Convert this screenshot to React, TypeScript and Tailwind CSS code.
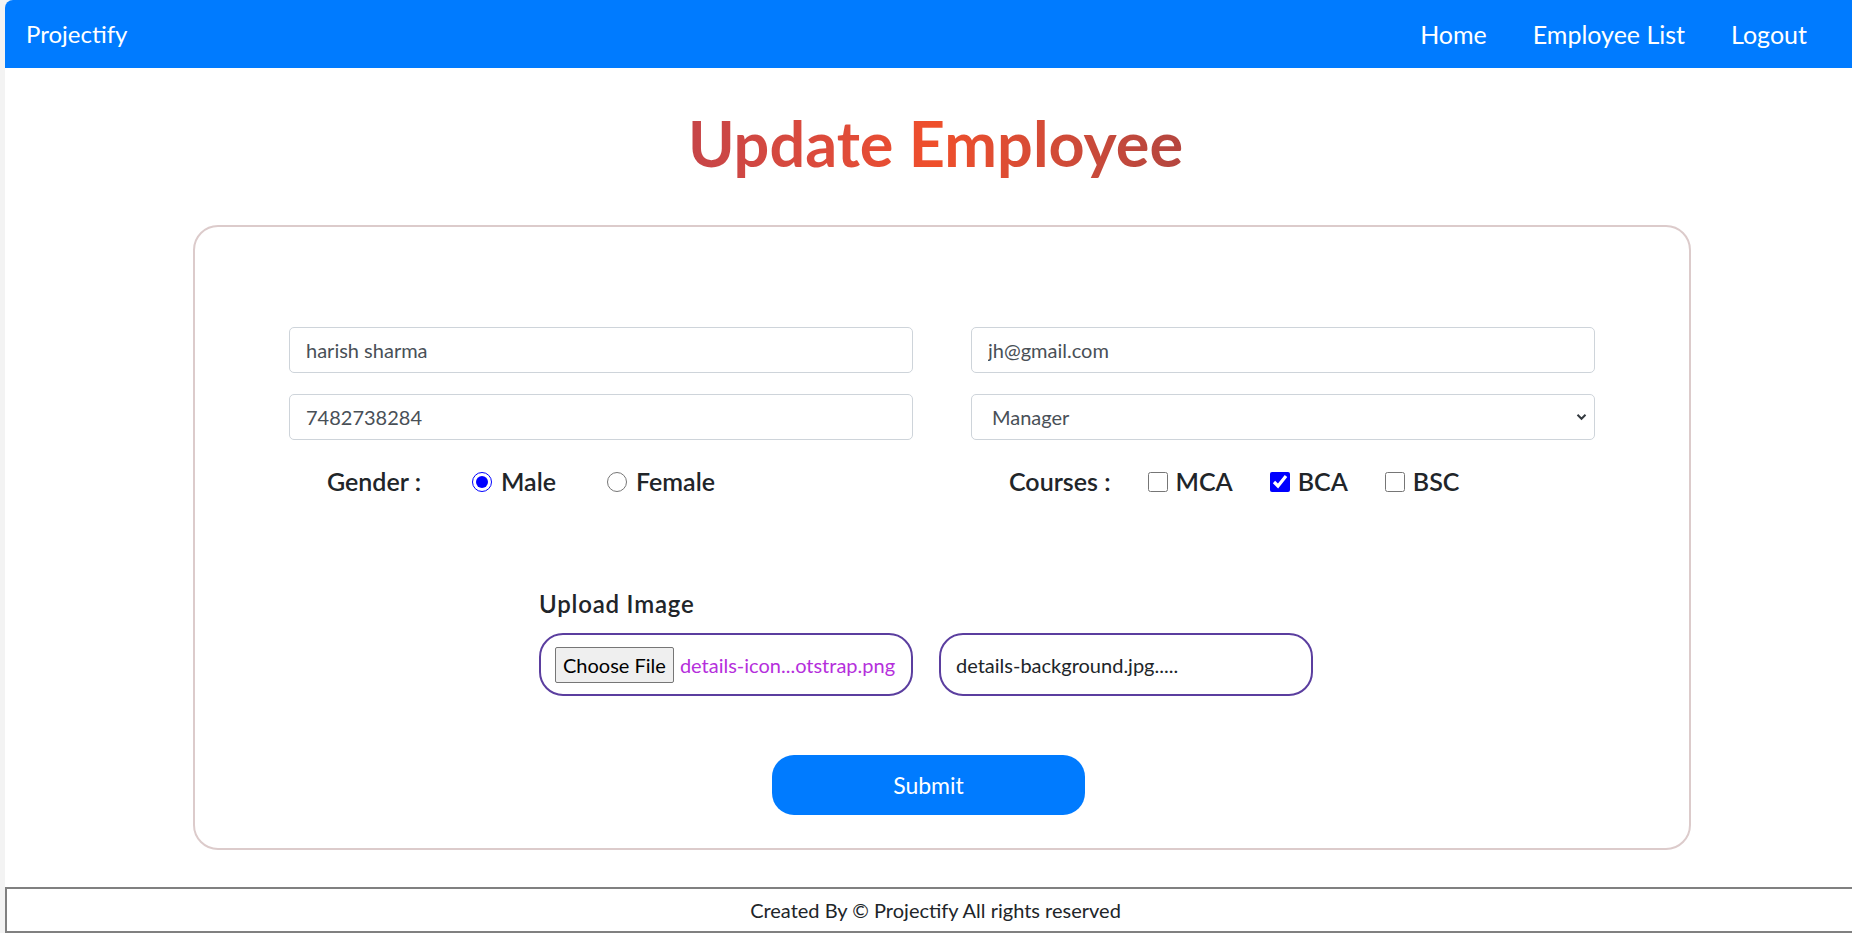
import { useState } from 'react';

const font = "font-['Lato','Open_Sans',sans-serif]";

const Navbar = () => {
  return (
    <nav className="h-[68px] bg-[#007bff] flex items-center justify-between pl-[21px] pr-[22px]">
      <span className="text-white text-[24px] leading-none">Projectify</span>
      <ul className="flex items-center">
        {['Home', 'Employee List', 'Logout'].map((item) => (
          <li key={item} className="px-[23px] text-white text-[25px] leading-none">
            {item}
          </li>
        ))}
      </ul>
    </nav>
  );
};

const Chevron = () => (
  <svg width="11" height="8" viewBox="0 0 11 8" className="absolute right-[8px] top-1/2 -translate-y-1/2">
    <path d="M1.5 1.8 L5.5 5.8 L9.5 1.8" fill="none" stroke="#343a40" strokeWidth="2" />
  </svg>
);

const App = () => {
  const [gender, setGender] = useState('male');
  const [courses, setCourses] = useState({ MCA: false, BCA: true, BSC: false });

  const inputCls =
    'h-[46px] w-full rounded-[5px] border border-[#ced4da] bg-white px-[16px] text-[20px] text-[#495057] outline-none';

  return (
    <div className={`min-h-screen bg-[#f3f3f3] pl-[5px] ${font}`}>
      <div className="bg-white rounded-tl-[8px] overflow-hidden min-h-[933px] flex flex-col">
        <Navbar />

        <h1 className="mt-[38px] pl-[14px] text-center text-[63px] font-bold leading-[74px]">
          <span className="bg-linear-to-r from-[#c64548] via-[#ef4f2b] to-[#b4463f] bg-clip-text text-transparent">
            Update Employee
          </span>
        </h1>

        <div className="mt-[45px] ml-[188px] w-[1498px] h-[625px] border-2 border-[#dccbcb] rounded-[25px] pt-[100px] px-[94px]">
          <div className="grid grid-cols-2 gap-x-[58px] gap-y-[21px]">
            <input className={inputCls} defaultValue="harish sharma" />
            <input className={inputCls} defaultValue="jh@gmail.com" />
            <input className={inputCls} defaultValue="7482738284" />
            <div className="relative">
              <select className={`${inputCls} appearance-none pl-[20px]`} defaultValue="Manager">
                <option>HR</option>
                <option>Manager</option>
                <option>Sales</option>
              </select>
              <Chevron />
            </div>
          </div>

          <div className="mt-[27px] grid grid-cols-2 gap-x-[58px] text-[25px] font-semibold text-[#212529]">
            <div className="h-[30px] flex items-center pl-[38px]">
              <span className="mr-[51px]">Gender :</span>
              <label className="flex items-center gap-[9px] mr-[51px]">
                <input
                  type="radio"
                  name="gender"
                  checked={gender === 'male'}
                  onChange={() => setGender('male')}
                  className="w-[20px] h-[20px] m-0 accent-[#0000ff]"
                />
                Male
              </label>
              <label className="flex items-center gap-[9px]">
                <input
                  type="radio"
                  name="gender"
                  checked={gender === 'female'}
                  onChange={() => setGender('female')}
                  className="w-[20px] h-[20px] m-0 accent-[#0000ff]"
                />
                Female
              </label>
            </div>
            <div className="h-[30px] flex items-center pl-[38px]">
              <span className="mr-[37px]">Courses :</span>
              {(['MCA', 'BCA', 'BSC'] as const).map((c) => (
                <label key={c} className="flex items-center gap-[8px] mr-[37px]">
                  <input
                    type="checkbox"
                    checked={courses[c]}
                    onChange={() => setCourses({ ...courses, [c]: !courses[c] })}
                    className="w-[20px] h-[20px] m-0 accent-[#0000ff]"
                  />
                  {c}
                </label>
              ))}
            </div>
          </div>

          <div className="mt-[93px] ml-[250px]">
            <p className="text-[24px] font-semibold tracking-[0.8px] text-[#212529] leading-[27px]">Upload Image</p>
            <div className="mt-[16px] flex gap-[26px]">
              <div className="w-[374px] h-[63px] rounded-[24px] border-2 border-[#5b3e9f] flex items-center pl-[14px] gap-[6px] text-[20px]">
                <span className="h-[36px] px-[7px] flex items-center bg-[#efefef] border border-[#767676] rounded-[2px] text-black whitespace-nowrap">
                  Choose File
                </span>
                <span className="text-[#b52fdc] whitespace-nowrap">details-icon...otstrap.png</span>
              </div>
              <div className="w-[374px] h-[63px] rounded-[24px] border-2 border-[#5b3e9f] flex items-center pl-[15px] text-[20px] text-[#212529]">
                details-background.jpg.....
              </div>
            </div>
          </div>

          <button className="mt-[59px] ml-[483px] w-[313px] h-[60px] rounded-[22px] bg-[#007bff] text-white text-[23px]">
            Submit
          </button>
        </div>

        <footer className="mt-[37px] h-[46px] pl-[12px] border-y-2 border-l-2 border-[#808080] flex items-center justify-center text-[20px] text-[#212529]">
          Created By © Projectify All rights reserved
        </footer>
      </div>
    </div>
  );
};

export default App;
